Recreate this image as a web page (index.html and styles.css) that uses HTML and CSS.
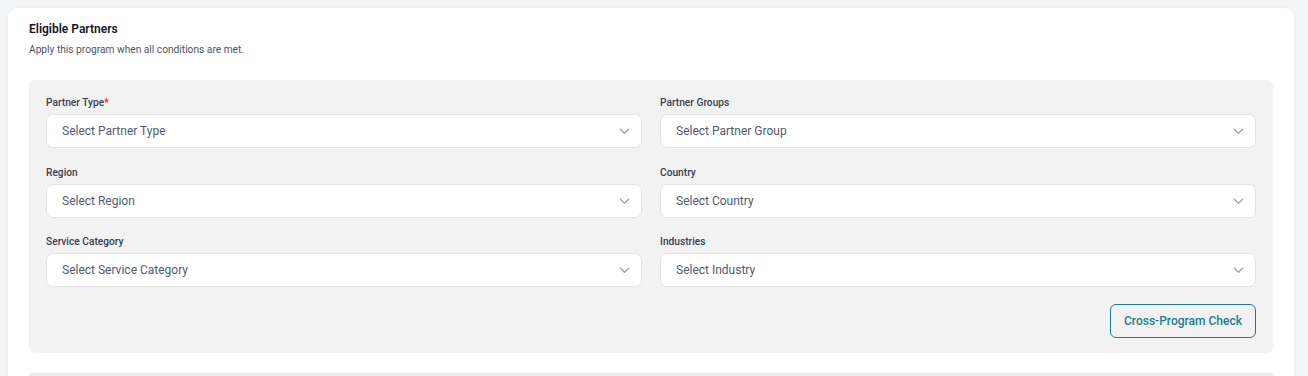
FILE: index.html
```html
<!DOCTYPE html>
<html lang="en">
<head>
<meta charset="UTF-8">
<meta name="viewport" content="width=device-width, initial-scale=1.0">
<title>Eligible Partners</title>
<link rel="stylesheet" href="styles.css">
</head>
<body>

<div class="card">
    <h3 class="card-title">Eligible Partners</h3>
    <p class="card-sub">Apply this program when all conditions are met.</p>

    <div class="panel">
        <div class="grid">
            <div class="field">
                <label>Partner Type<span class="req">*</span></label>
                <div class="select">
                    <span>Select Partner Type</span>
                    <svg class="chev" viewBox="0 0 12 8"><path d="M1 1.5l5 5 5-5"/></svg>
                </div>
            </div>
            <div class="field">
                <label>Partner Groups</label>
                <div class="select">
                    <span>Select Partner Group</span>
                    <svg class="chev" viewBox="0 0 12 8"><path d="M1 1.5l5 5 5-5"/></svg>
                </div>
            </div>
            <div class="field">
                <label>Region</label>
                <div class="select">
                    <span>Select Region</span>
                    <svg class="chev" viewBox="0 0 12 8"><path d="M1 1.5l5 5 5-5"/></svg>
                </div>
            </div>
            <div class="field">
                <label>Country</label>
                <div class="select">
                    <span>Select Country</span>
                    <svg class="chev" viewBox="0 0 12 8"><path d="M1 1.5l5 5 5-5"/></svg>
                </div>
            </div>
            <div class="field">
                <label>Service Category</label>
                <div class="select">
                    <span>Select Service Category</span>
                    <svg class="chev" viewBox="0 0 12 8"><path d="M1 1.5l5 5 5-5"/></svg>
                </div>
            </div>
            <div class="field">
                <label>Industries</label>
                <div class="select">
                    <span>Select Industry</span>
                    <svg class="chev" viewBox="0 0 12 8"><path d="M1 1.5l5 5 5-5"/></svg>
                </div>
            </div>
        </div>
        <div class="actions">
            <button class="check-btn">Cross-Program Check</button>
        </div>
    </div>

    <div class="next-panel"></div>
</div>

</body>
</html>
```

FILE: styles.css
```css
body {
    font-family: Roboto, "Liberation Sans", Arial, sans-serif;
    background-color: #f4f5f7;
    margin: 0;
    padding: 8px 14px 0 8px;
    height: 376px;
    box-sizing: border-box;
    overflow: hidden;
}

.card {
    background-color: #fff;
    border-radius: 9px 9px 0 0;
    box-shadow: 0 0 3px rgba(0, 0, 0, 0.06);
    padding: 13px 21px 0;
    height: 100%;
    box-sizing: border-box;
    overflow: hidden;
}

.card-title {
    margin: 0;
    font-size: 12px;
    line-height: 16px;
    font-weight: 600;
    color: #111827;
}

.card-sub {
    margin: 6px 0 0;
    font-size: 10.2px;
    line-height: 14px;
    color: #4b5563;
}

.panel {
    margin-top: 23px;
    background-color: #f2f2f2;
    border-radius: 6px;
    padding: 16px 17px 15px;
}

.grid {
    display: grid;
    grid-template-columns: 1fr 1fr;
    column-gap: 18px;
    row-gap: 17.5px;
}

.field label {
    display: block;
    font-size: 10.2px;
    line-height: 14px;
    font-weight: 500;
    color: #374151;
    margin-bottom: 4px;
}

.req {
    color: #dc2626;
}

.select {
    display: flex;
    align-items: center;
    justify-content: space-between;
    height: 34px;
    box-sizing: border-box;
    background-color: #fff;
    border: 1px solid #e3e3e3;
    border-radius: 7px;
    padding: 0 11px 0 15px;
    font-size: 12px;
    color: #515b6e;
}

.chev {
    width: 11px;
    height: 8px;
    fill: none;
    stroke: #a3a3a3;
    stroke-width: 1.3;
}

.actions {
    display: flex;
    justify-content: flex-end;
    margin-top: 17px;
}

.check-btn {
    height: 34px;
    width: 146px;
    background-color: transparent;
    border: 1px solid #1b7d93;
    border-radius: 6px;
    color: #1b7d93;
    font-family: inherit;
    font-size: 12px;
    font-weight: 500;
    cursor: pointer;
}

.next-panel {
    margin-top: 20px;
    height: 3px;
    background-color: #ebebeb;
    border-radius: 6px 6px 0 0;
}
```
